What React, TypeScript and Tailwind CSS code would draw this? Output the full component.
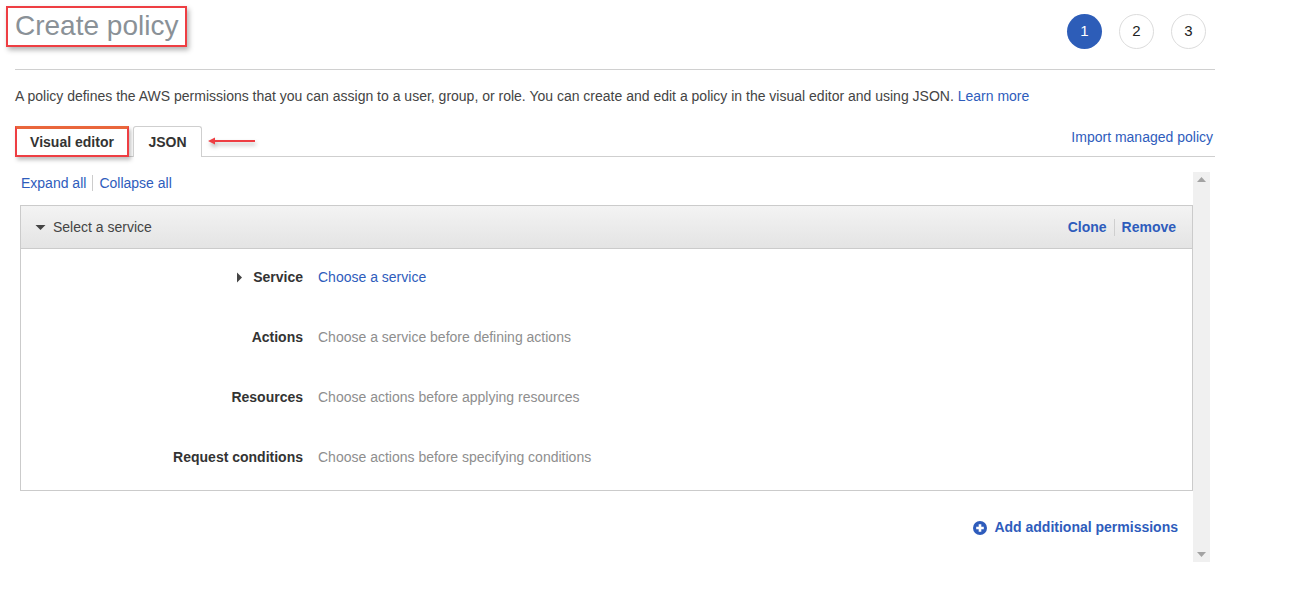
import React from 'react';

const rows = [
    { label: 'Service', value: 'Choose a service', link: true, caret: true },
    { label: 'Actions', value: 'Choose a service before defining actions' },
    { label: 'Resources', value: 'Choose actions before applying resources' },
    { label: 'Request conditions', value: 'Choose actions before specifying conditions' },
];

function Step({ n, active }: { n: number; active?: boolean }) {
    return (
        <div
            className={
                active
                    ? 'size-[35px] rounded-full bg-[#2d5db8] text-white flex items-center justify-center text-[15px]'
                    : 'size-[35px] rounded-full border border-[#dcdcdc] text-[#222] flex items-center justify-center text-[15px]'
            }
        >
            {n}
        </div>
    );
}

export default function App() {
    return (
        <div className="bg-white min-h-[598px] text-[14px] text-[#444] font-['Liberation_Sans',Arial,sans-serif]">
            <div className="w-[1200px] ml-[15px]">

                {/* Header */}
                <header className="h-[70px] flex justify-between border-b border-[#d0d0d0]">
                    <div className="pt-[6px] -ml-[9px]">
                        <h1 className="border-2 border-[#ee3e43] shadow-[2px_3px_5px_rgba(0,0,0,0.3)] h-[41px] pl-[7px] pr-[7px] text-[28px] leading-[36px] text-[#8a9197]">
                            Create policy
                        </h1>
                    </div>
                    <div className="flex gap-[17px] pt-[14px] pr-[9px]">
                        <Step n={1} active />
                        <Step n={2} />
                        <Step n={3} />
                    </div>
                </header>

                <p className="mt-[17px] leading-[18px] text-[#444]">
                    A policy defines the AWS permissions that you can assign to a user, group, or role. You can create and edit a policy in the visual editor and using JSON.{' '}
                    <span className="text-[#2e5cbc]">Learn more</span>
                </p>

                {/* Tabs */}
                <div className="mt-[21px] h-[31px] flex items-end border-b border-[#cfcfcf]">
                    <div className="flex items-end h-[31px] -mb-px">
                        <div className="h-[31px] w-[114px] border-2 border-[#ee3e43] border-t-[3px] border-t-[#e9663b] shadow-[2px_3px_4px_rgba(0,0,0,0.25)] flex items-center justify-center font-bold text-[#333] bg-white">
                            Visual editor
                        </div>
                        <div className="ml-[4px] h-[31px] w-[69px] border border-b-0 border-[#cfcfcf] rounded-t-[3px] flex items-center justify-center font-bold text-[#333] bg-white">
                            JSON
                        </div>
                        <div className="self-center ml-[5px] mb-[1px] flex items-center drop-shadow-[1px_3px_2px_rgba(0,0,0,0.3)]">
                            <svg width="50" height="10" viewBox="0 0 50 10">
                                <path d="M1 5 L8 1.5 L8 4 L48 4 L48 6 L8 6 L8 8.5 Z" fill="#ee3e43" />
                            </svg>
                        </div>
                    </div>
                    <span className="ml-auto self-center mb-[8px] mr-[2px] text-[#2e5cbc]">Import managed policy</span>
                </div>

                {/* Scroll area */}
                <div className="mt-[15px] w-[1195px] h-[390px] flex">
                    <div className="flex-1 pl-[5px]">
                        <div className="pt-[3px] h-[33px] flex items-start leading-[16px]">
                            <span className="pl-[1px] text-[#2e5cbc]">Expand all</span>
                            <span className="mx-[6px] w-px h-[16px] bg-[#ccc]" />
                            <span className="text-[#2e5cbc]">Collapse all</span>
                        </div>

                        <div className="border border-[#cbcbcb]">
                            <div className="h-[43px] bg-gradient-to-b from-[#f3f3f3] to-[#e4e4e4] border-b border-[#cbcbcb] flex items-center pl-[14px] pr-[16px]">
                                <svg width="11" height="7" viewBox="0 0 11 7" className="mr-[7px]">
                                    <path d="M0.5 1 L10.5 1 L5.5 6 Z" fill="#444" />
                                </svg>
                                <span className="text-[#444]">Select a service</span>
                                <div className="ml-auto flex items-center font-bold text-[#2e5cbc]">
                                    <span>Clone</span>
                                    <span className="mx-[7px] w-px h-[17px] bg-[#cfcfcf]" />
                                    <span>Remove</span>
                                </div>
                            </div>
                            <div className="pt-[18px] pb-[23px] flex flex-col gap-[40px]">
                                {rows.map((r) => (
                                    <div key={r.label} className="h-[20px] flex items-center">
                                        <div className="w-[282px] flex items-center justify-end font-bold text-[#333]">
                                            {r.caret && (
                                                <svg width="7" height="11" viewBox="0 0 7 11" className="mr-[10px]">
                                                    <path d="M1 0.5 L6 5.5 L1 10.5 Z" fill="#444" />
                                                </svg>
                                            )}
                                            {r.label}
                                        </div>
                                        <div className={r.link ? 'ml-[15px] text-[#2e5cbc]' : 'ml-[15px] text-[#8e8e8e]'}>{r.value}</div>
                                    </div>
                                ))}
                            </div>
                        </div>

                        <div className="mt-[26px] flex justify-end pr-[15px] items-center font-bold text-[#2e5cbc]">
                            <svg width="14" height="14" viewBox="0 0 14 14" className="mr-[7px]">
                                <circle cx="7" cy="7" r="7" fill="#2e5cbc" />
                                <path d="M7 3.2 V10.8 M3.2 7 H10.8" stroke="#fff" strokeWidth="2.6" />
                            </svg>
                            Add additional permissions
                        </div>
                    </div>

                    {/* Scrollbar */}
                    <div className="w-[17px] bg-[#f0f0f0] flex flex-col items-center justify-between py-[5px]">
                        <svg width="9" height="5" viewBox="0 0 9 5">
                            <path d="M0 5 L4.5 0 L9 5 Z" fill="#a3a3a3" />
                        </svg>
                        <svg width="9" height="5" viewBox="0 0 9 5">
                            <path d="M0 0 L9 0 L4.5 5 Z" fill="#a3a3a3" />
                        </svg>
                    </div>
                </div>
            </div>
        </div>
    );
}
